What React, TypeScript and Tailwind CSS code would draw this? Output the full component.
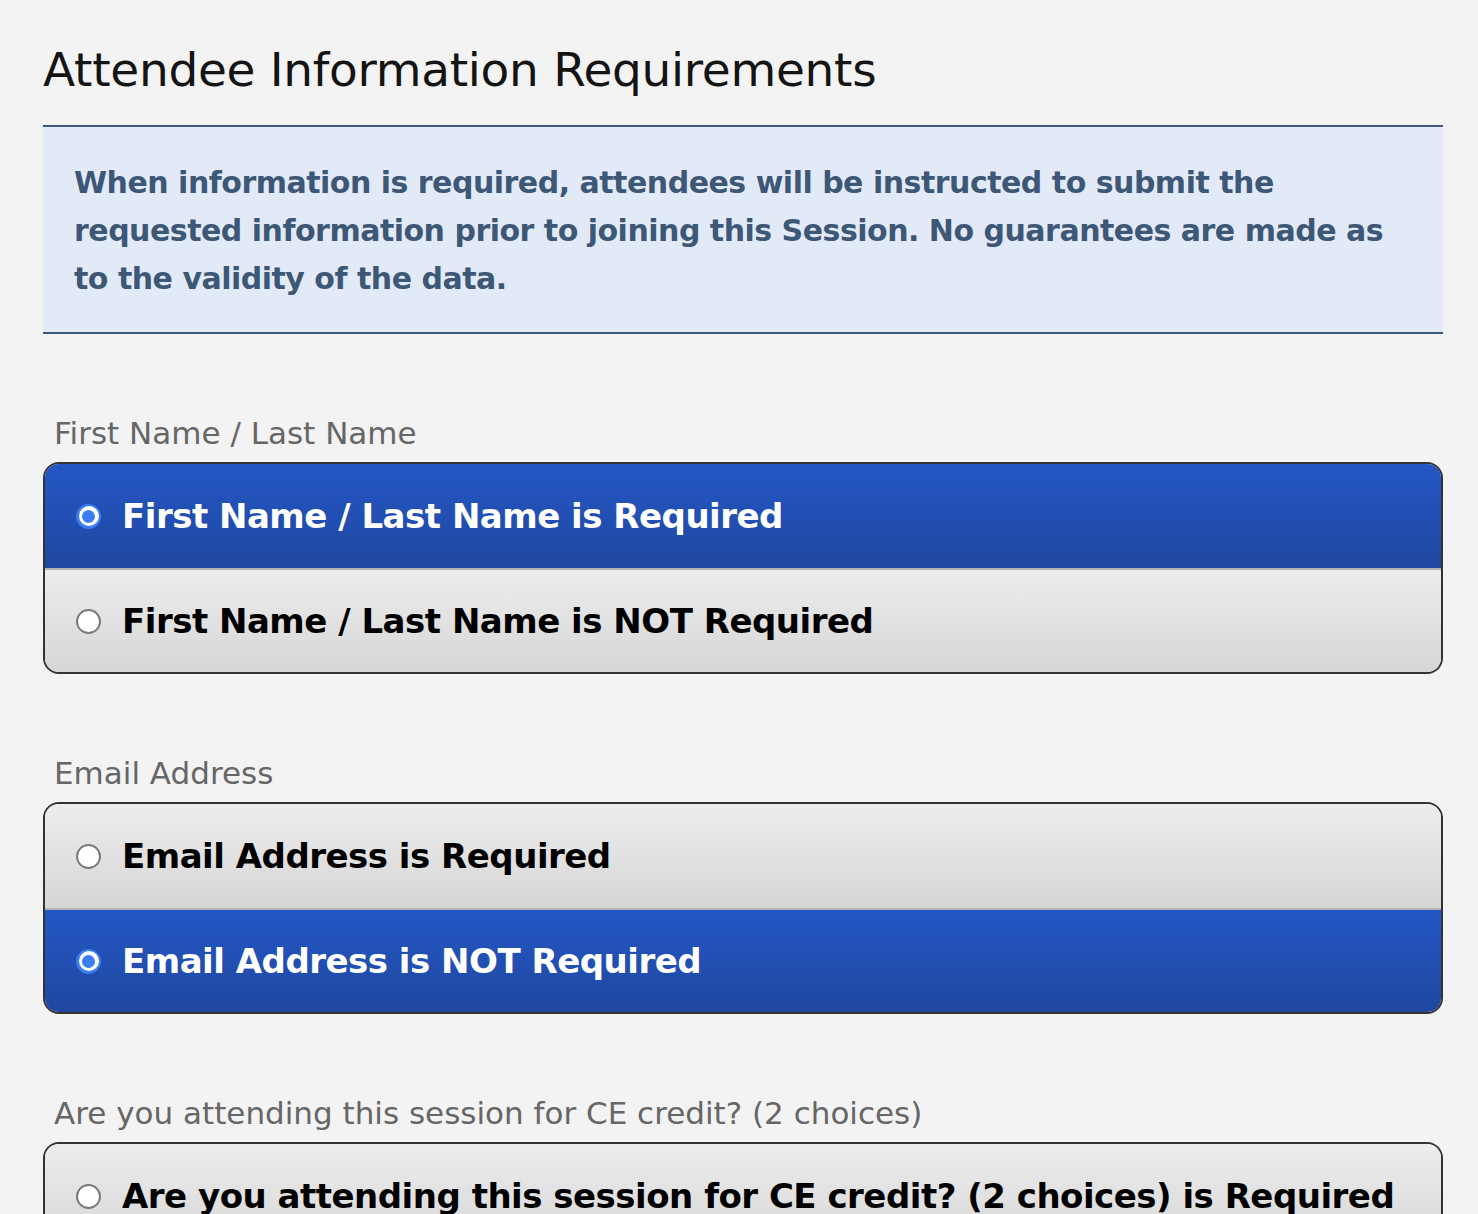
import React from "react";

const font = { fontFamily: '"DejaVu Sans", "Lucida Grande", sans-serif' };

function Radio({ checked }: { checked: boolean }) {
  if (checked) {
    return (
      <span className="flex h-[25px] w-[25px] shrink-0 items-center justify-center rounded-full bg-[#3b7cf3]">
        <span className="flex h-[20px] w-[20px] items-center justify-center rounded-full bg-white">
          <span className="h-[13px] w-[13px] rounded-full bg-[#3b7cf3]" />
        </span>
      </span>
    );
  }
  return (
    <span className="h-[25px] w-[25px] shrink-0 rounded-full border-2 border-[#7a7a7a] bg-white" />
  );
}

function Option({ label, checked, first }: { label: string; checked: boolean; first: boolean }) {
  return (
    <div
      className={
        "flex h-[104px] items-center gap-[21px] pl-[31px] pr-4 " +
        (first ? "" : "border-t-2 border-[#b4b4b4] ") +
        (checked
          ? "bg-gradient-to-b from-[#2457c5] to-[#1f47a0] text-white"
          : "bg-gradient-to-b from-[#ededed] to-[#d6d6d6] text-black")
      }
    >
      <Radio checked={checked} />
      <span className="whitespace-nowrap text-[34px] font-bold tracking-[-0.5px]">{label}</span>
    </div>
  );
}

function Group({ title, options, selected, first }: { title: string; options: string[]; selected: number; first?: boolean }) {
  return (
    <div className={first ? "mt-[75px]" : "mt-[75px]"}>
      <div className="pl-[11px] text-[31px] leading-[48px] text-[#666666]">{title}</div>
      <div className="mt-[5px] overflow-hidden rounded-[16px] border-2 border-[#333333]">
        {options.map((o, i) => (
          <Option key={i} label={o} checked={i === selected} first={i === 0} />
        ))}
      </div>
    </div>
  );
}

export default function App() {
  return (
    <div className="min-h-[1214px] overflow-hidden bg-[#f3f3f3] pl-[43px] pr-[35px]" style={font}>
      <h1 className="pt-[34px] text-[47px] font-normal leading-[72px] tracking-[-0.3px] text-[#141414]">
        Attendee Information Requirements
      </h1>
      <div className="mt-[19px] border-y-2 border-[#3d5878] bg-[#e3eaf7] px-[31px] pb-[29px] pt-[32px]">
        <p className="text-[30px] font-bold leading-[48px] tracking-[-0.5px] text-[#3d5777]">
          When information is required, attendees will be instructed to submit the requested information prior to joining this Session. No guarantees are made as to the validity of the data.
        </p>
      </div>
      <Group
        first
        title="First Name / Last Name"
        options={["First Name / Last Name is Required", "First Name / Last Name is NOT Required"]}
        selected={0}
      />
      <Group
        title="Email Address"
        options={["Email Address is Required", "Email Address is NOT Required"]}
        selected={1}
      />
      <Group
        title="Are you attending this session for CE credit? (2 choices)"
        options={[
          "Are you attending this session for CE credit? (2 choices) is Required",
          "Are you attending this session for CE credit? (2 choices) is NOT Required",
        ]}
        selected={1}
      />
    </div>
  );
}
